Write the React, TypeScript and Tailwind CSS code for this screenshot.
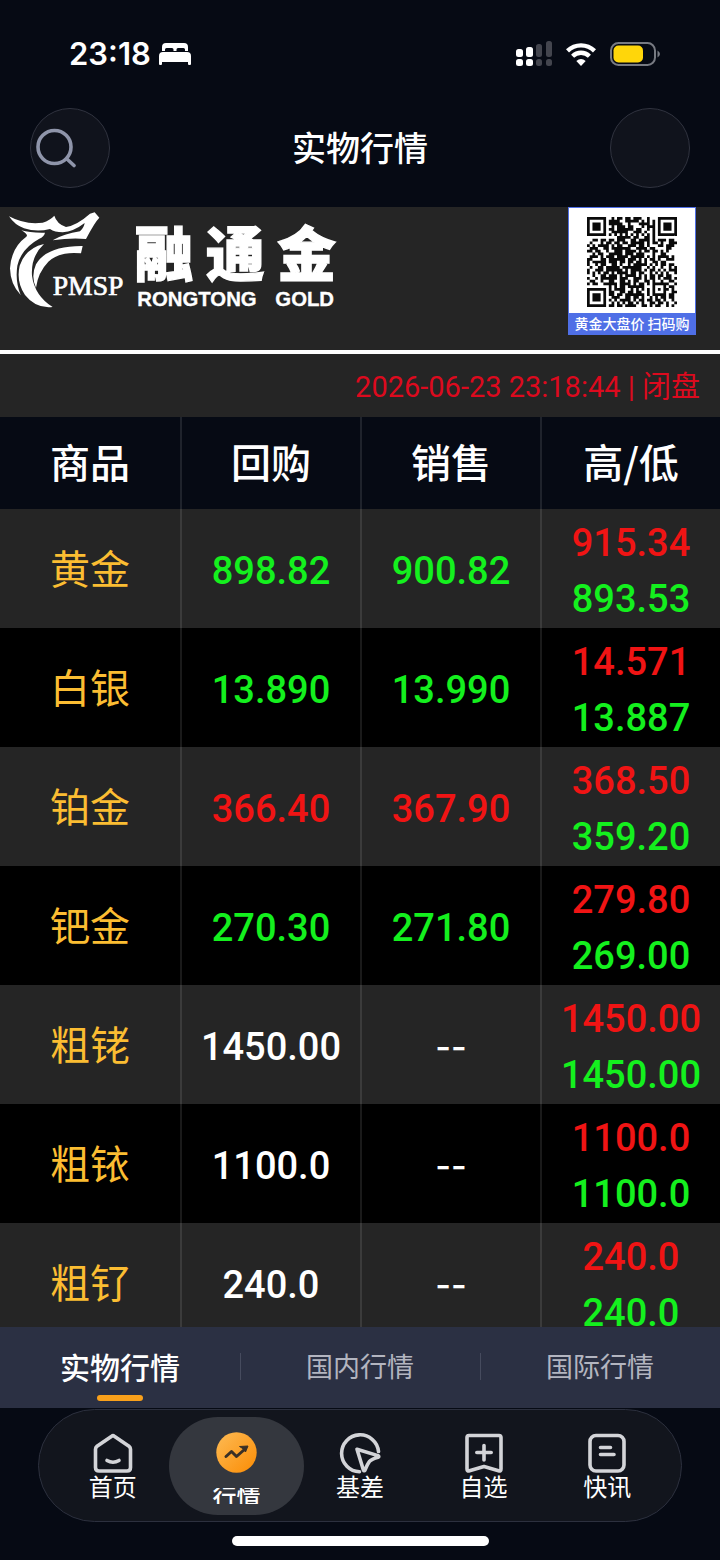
import React from "react";

type Tone = "up" | "down" | "flat";

interface Quote {
  name: string;
  buy: string;
  sell: string;
  high: string;
  low: string;
  tone: Tone;
}

const quotes: Quote[] = [
  { name: "黄金", buy: "898.82", sell: "900.82", high: "915.34", low: "893.53", tone: "down" },
  { name: "白银", buy: "13.890", sell: "13.990", high: "14.571", low: "13.887", tone: "down" },
  { name: "铂金", buy: "366.40", sell: "367.90", high: "368.50", low: "359.20", tone: "up" },
  { name: "钯金", buy: "270.30", sell: "271.80", high: "279.80", low: "269.00", tone: "down" },
  { name: "粗铑", buy: "1450.00", sell: "--", high: "1450.00", low: "1450.00", tone: "flat" },
  { name: "粗铱", buy: "1100.0", sell: "--", high: "1100.0", low: "1100.0", tone: "flat" },
  { name: "粗钌", buy: "240.0", sell: "--", high: "240.0", low: "240.0", tone: "flat" },
];

const toneClass: Record<Tone, string> = {
  up: "text-[#f01414]",
  down: "text-[#14f01e]",
  flat: "text-white",
};

const qrRows = [
  "#######..#.##.##.###..#...#######",
  "#.....#.####..#####.#.#.#.#.....#",
  "#.###.#.#####..#...####.#.#.###.#",
  "#.###.#..#.###.##...#.###.#.###.#",
  "#.###.#.##.######.##..#.#.#.###.#",
  "#.....#..######..###.#..#.#.....#",
  "#######.#.#.#.#.#.#.#.#.#.#######",
  "...........#####.##..##.#........",
  "..##.##.##.###..##.####.#.###.##.",
  ".#...#.##.##.##.#####.#.##.#..###",
  "#.#.####.#.##..###.##.#...##.###.",
  ".###..##.#######..####.##....##..",
  "##.##..#..###.####.#.##.##.#.#...",
  "..#.##..#####.###.###...#..##....",
  ".###.#.###.####.#####.#.#.####.#.",
  "##...##.######.###.#.#.##.#..###.",
  "#.#####.###.##.##.##.#..##.##....",
  "#..#.##..##.#..#.#####.#.#.##.##.",
  ".#..##.#####.#######..#.#..#..#.#",
  "#..###.######.#.####.#.##.#.#.###",
  "#.#.#.##.#.####.##.##..#.#.#.#..#",
  "..#..##.###.#.####.#.#.##.##.##..",
  "#..#.######.###..###.#.##.#.###.#",
  ".##..#..##..##.#.##..##.#..#..##.",
  "#.##..#####.####.#.##.#.######..#",
  "........#.#.##.######...#...#.##.",
  "#######.#.####..#.#.#.#.#.#.##.#.",
  "#.....#.##..##.##.##..#.#...#..##",
  "#.###.#.##.##.#######.#.#####.##.",
  "#.###.#..###..##.##.#..#.#.##.##.",
  "#.###.#.#.#.####.#.##.##.##.#..#.",
  "#.....#..#.#.#.##.#.#..##.##.#..#",
  "#######.##.##.####..##.#.##..#.#.",
];

function QrCode() {
  const path = qrRows
    .flatMap((row, y) => Array.from(row).map((c, x) => (c === "#" ? `M${x} ${y}h1v1h-1z` : "")))
    .join("");
  return (
    <svg viewBox="0 0 33 33" className="size-[90px]" role="img" aria-label="二维码">
      <path d={path} fill="#0a0a0a" />
    </svg>
  );
}

function BrandLogo() {
  return (
    <svg viewBox="0 6 1050 324" className="w-[350px] h-[108px] shrink-0" fill="#fff">
      <path d="M27 34Q75 60 128 53Q150 46 163 32Q170 56 198 66Q232 60 270 26L284 22L298 38Q284 52 258 102Q212 98 158 106Q192 86 240 79Q252 68 254 54Q220 80 188 82Q164 82 150 72Q110 82 72 70Q44 60 27 34Z" />
      <path d="M64 76Q90 84 135 83Q132 95 118 101Q64 130 52 182Q45 230 62 270Q31 238 30 190Q34 128 78 96Q88 90 64 76Z" />
      <path d="M132 117Q92 154 96 212Q104 272 158 306Q108 312 75 270Q48 230 59 182Q76 130 132 117Z" />
      <path d="M248 123L243 145Q180 138 145 170Q114 202 108 248Q92 214 108 178Q140 122 248 123Z" />
      <text x="158" y="270" fontFamily="Liberation Serif, serif" fontSize="83" stroke="#fff" strokeWidth="2">PMSP</text>
      <g fontFamily="Noto Sans CJK SC, sans-serif" fontWeight="900" fontSize="176" stroke="#fff" strokeWidth="4">
        <text x="404" y="214">融</text>
        <text x="618" y="214">通</text>
        <text x="832" y="214">金</text>
      </g>
      <g fontFamily="Liberation Sans, sans-serif" fontWeight="700" fontSize="61" stroke="#fff" strokeWidth="1">
        <text x="412" y="302">RONGTONG</text>
        <text x="826" y="302">GOLD</text>
      </g>
    </svg>
  );
}

function StatusBar() {
  return (
    <div className="flex h-[108px] shrink-0 items-center justify-between pr-[60px] pl-[69px]">
      <div className="flex items-center gap-2">
        <span className="font-['Inter',sans-serif] text-[31px] leading-9 font-semibold">23:18</span>
        <svg viewBox="0 0 32 22" className="h-[22px] w-8" fill="#fff">
          <path d="M3 8V4Q3 0 7 0H25Q29 0 29 4V8H26V6.500Q26 5 24.500 5H19Q17.500 5 17.500 6.500V8H14.500V6.500Q14.500 5 13 5H7.500Q6 5 6 6.500V8Z" />
          <path d="M4 9H28Q32 9 32 13V21Q32 22 31 22H30Q29 22 29 21V19H3V21Q3 22 2 22H1Q0 22 0 21V13Q0 9 4 9Z" />
        </svg>
      </div>
      <div className="flex items-center">
        <svg viewBox="0 0 36 26" className="h-[26px] w-9" fill="#fff">
          <rect x="0" y="8" width="7" height="8" rx="2.500" />
          <rect x="10" y="6" width="7" height="10" rx="2.500" />
          <rect x="0" y="18" width="7" height="7" rx="2.500" />
          <rect x="10" y="18" width="7" height="7" rx="2.500" />
          <g fill="#43454e">
            <rect x="20" y="3" width="6" height="13" rx="2.500" />
            <rect x="30" y="0" width="6" height="16" rx="2.500" />
            <rect x="20" y="18" width="6" height="7" rx="2.500" />
            <rect x="30" y="18" width="6" height="7" rx="2.500" />
          </g>
        </svg>
        <svg viewBox="0 0 30 23" className="ml-[14px] h-[23px] w-[30px]" fill="none" stroke="#fff" strokeWidth="4.400">
          <path d="M1.500 7.800A19.500 19.500 0 0 1 28.500 7.800" />
          <path d="M6.600 13.200A12 12 0 0 1 23.400 13.200" />
          <path d="M15 23L10.300 18Q15 14 19.700 18Z" fill="#fff" stroke="none" />
        </svg>
        <svg viewBox="0 0 50 24" className="ml-[14px] h-6 w-[50px]">
          <rect x="1" y="1" width="44" height="22" rx="7.500" fill="none" stroke="#777a82" strokeWidth="2" />
          <rect x="3.500" y="3.500" width="29.500" height="17" rx="5" fill="#ffd60a" />
          <path d="M47.500 8.500Q52.500 12 47.500 15.500Z" fill="#777a82" />
        </svg>
      </div>
    </div>
  );
}

function TopBar() {
  return (
    <header className="flex h-[99px] shrink-0 items-start justify-between px-[30px]">
      <button
        aria-label="搜索"
        className="flex size-20 items-center rounded-full border border-[#30333f] bg-[#10131c] pl-[5px]"
      >
        <svg viewBox="0 0 42 40" className="h-10 w-[42px]" fill="none" stroke="#8f95aa" strokeWidth="3.600" strokeLinecap="round">
          <circle cx="18.500" cy="19" r="16.500" />
          <path d="M31.500 31.500L38 37.500" />
        </svg>
      </button>
      <h1 className="text-[34px] leading-[78px] font-medium">实物行情</h1>
      <button aria-label="更多" className="size-20 rounded-full border border-[#30333f] bg-[#10131c]" />
    </header>
  );
}

function QuoteTable() {
  const border = "border-l-2 border-white/10 first:border-l-0";
  return (
    <table className="w-full table-fixed border-separate border-spacing-0 text-center">
      <thead>
        <tr className="h-[92px] bg-[#060a14] text-[40px] leading-[48px]">
          {["商品", "回购", "销售", "高/低"].map((h) => (
            <th key={h} scope="col" className={`p-0 pb-1 font-medium ${border}`}>
              {h}
            </th>
          ))}
        </tr>
      </thead>
      <tbody className="font-['Roboto',sans-serif] text-[38px] leading-[56px] font-medium">
        {quotes.map((q) => (
          <tr key={q.name} className="h-[119px] odd:bg-[#252525] even:bg-black">
            <th scope="row" className="p-0 pb-1 font-['Noto_Sans_CJK_SC',sans-serif] text-[40px] font-normal text-[#fbbd32]">
              {q.name}
            </th>
            {[q.buy, q.sell].map((value, i) => (
              <td key={i} className={`p-0 pt-1 ${border} ${toneClass[q.tone]}`}>
                {value === "--" ? <span className="font-['Inter',sans-serif] text-[34px]">--</span> : value}
              </td>
            ))}
            <td className={`p-0 pt-1 ${border}`}>
              <div className="text-[#f01414]">{q.high}</div>
              <div className="text-[#14f01e]">{q.low}</div>
            </td>
          </tr>
        ))}
      </tbody>
    </table>
  );
}

function MarketTabs() {
  const tabs = ["实物行情", "国内行情", "国际行情"];
  return (
    <div role="tablist" className="grid h-[81px] shrink-0 grid-cols-3 items-center bg-[#2b3043]">
      {tabs.map((tab, i) => (
        <button
          key={tab}
          role="tab"
          aria-selected={i === 0}
          className={`relative h-full pb-[2px] ${i === 0 ? "text-[30px] font-medium text-white" : "text-[27px] text-[#b3b5c0]"}`}
        >
          {tab}
          {i === 0 && (
            <span className="absolute bottom-[7px] left-1/2 h-[6px] w-[46px] -translate-x-1/2 rounded-full bg-[#f9a01b]" />
          )}
          {i > 0 && <span className="absolute top-[26px] left-0 h-[27px] w-px bg-[#464b5e]" />}
        </button>
      ))}
    </div>
  );
}

const iconClass = "size-10 shrink-0";
const line = {
  fill: "none",
  stroke: "#d3d4d8",
  strokeWidth: 3.6,
  strokeLinecap: "round" as const,
  strokeLinejoin: "round" as const,
};

function HomeIcon() {
  return (
    <svg viewBox="0 0 40 40" className={iconClass} {...line}>
      <path d="M18.700 3.200Q20 2.200 21.300 3.200L36 13.300Q37.500 14.400 37.500 16.200V34.500Q37.500 38 34 38H6Q2.500 38 2.500 34.500V16.200Q2.500 14.400 4 13.300Z" />
      <path d="M14 27.500Q20 31 26 27.500" />
    </svg>
  );
}

function BasisIcon() {
  return (
    <svg viewBox="0 0 42 42" className="size-[42px] shrink-0 -mb-[2px]" {...line}>
      <path d="M39.500 18.500A18.500 18.500 0 1 0 20.500 38.800" />
      <path d="M18 16.200L39 22.600Q40.500 23.400 39.200 24.200Q32.500 26 30.500 28.400Q28.500 31 26 37.200Q25.200 38.400 24.400 37Z" />
    </svg>
  );
}

function FavoriteIcon() {
  return (
    <svg viewBox="0 0 40 40" className={iconClass} {...line}>
      <path d="M5 2.500H35Q37 2.500 37 4.500V36Q37 38.500 34.500 37.800L20 33.500L5.500 37.800Q3 38.500 3 36V4.500Q3 2.500 5 2.500Z" />
      <path d="M20 12.500V27M12.800 19.500H27.200" />
    </svg>
  );
}

function NewsIcon() {
  return (
    <svg viewBox="0 0 40 40" className={iconClass} {...line}>
      <rect x="3" y="2.500" width="34" height="35.500" rx="6" />
      <path d="M13.500 14.500H23.500M13.500 21.500H27" />
    </svg>
  );
}

function TrendIcon() {
  return (
    <svg viewBox="0 0 41 41" className="size-[41px] shrink-0">
      <defs>
        <linearGradient id="trend" x1="0" y1="0" x2="1" y2="1">
          <stop offset="0" stopColor="#fdbb55" />
          <stop offset="1" stopColor="#fb8c04" />
        </linearGradient>
      </defs>
      <circle cx="20.500" cy="20.500" r="20.200" fill="url(#trend)" />
      <path d="M10 24.500L15.500 19.500L20.500 24.500L29 17" fill="none" stroke="#3a3026" strokeWidth="3" strokeLinecap="round" strokeLinejoin="round" />
      <path d="M23.500 14.500L32 14L29.500 20L27.500 17Z" fill="#3a3026" stroke="#3a3026" strokeLinejoin="round" />
    </svg>
  );
}

const navItems = [
  { label: "首页", Icon: HomeIcon },
  { label: "行情", Icon: TrendIcon },
  { label: "基差", Icon: BasisIcon },
  { label: "自选", Icon: FavoriteIcon },
  { label: "快讯", Icon: NewsIcon },
];

function BottomNav() {
  return (
    <footer className="flex h-[152px] shrink-0 flex-col items-center bg-[#060a14] px-[38px] pt-px">
      <nav className="grid h-[113px] w-full grid-cols-5 items-center rounded-full border border-[#2c303e] bg-[#12151d] px-3">
        {navItems.map(({ label, Icon }) =>
          label === "行情" ? (
            <a
              key={label}
              href="#market"
              aria-current="page"
              className="-mx-[6px] flex h-[98px] flex-col items-center gap-[15px] rounded-[49px] bg-[#34373e] pt-[15px]"
            >
              <Icon />
              <span className="flex h-4 items-center overflow-hidden text-[24px] leading-[22px] font-medium">{label}</span>
            </a>
          ) : (
            <a key={label} href="#" className="flex flex-col items-center">
              <Icon />
              <span className="text-[24px] leading-[26px]">{label}</span>
            </a>
          ),
        )}
      </nav>
      <div className="mt-[14px] h-[10px] w-[257px] rounded-full bg-white" />
    </footer>
  );
}

export default function App() {
  return (
    <div className="flex h-screen w-full flex-col overflow-hidden bg-[#060a14] font-['Noto_Sans_CJK_SC',sans-serif] text-white">
      <StatusBar />
      <TopBar />
      <main className="min-h-0 flex-1 overflow-hidden bg-[#252525]">
        <section className="flex h-[147px] items-start justify-between border-b-4 border-white pr-6">
          <BrandLogo />
          <div className="flex h-32 w-32 flex-col items-center justify-between border border-[#4f6fe6] bg-white pt-[9px]">
            <QrCode />
            <p className="w-full bg-[#4f6fe6] text-center text-[14px] leading-[21px] font-medium whitespace-nowrap">黄金大盘价 扫码购</p>
          </div>
        </section>
        <p className="h-[63px] pr-5 text-right font-['Roboto','Noto_Sans_CJK_SC',sans-serif] text-[29px] leading-[66px] text-[#dc0a1e]">
          2026-06-23 23:18:44 | 闭盘
        </p>
        <QuoteTable />
      </main>
      <MarketTabs />
      <BottomNav />
    </div>
  );
}
